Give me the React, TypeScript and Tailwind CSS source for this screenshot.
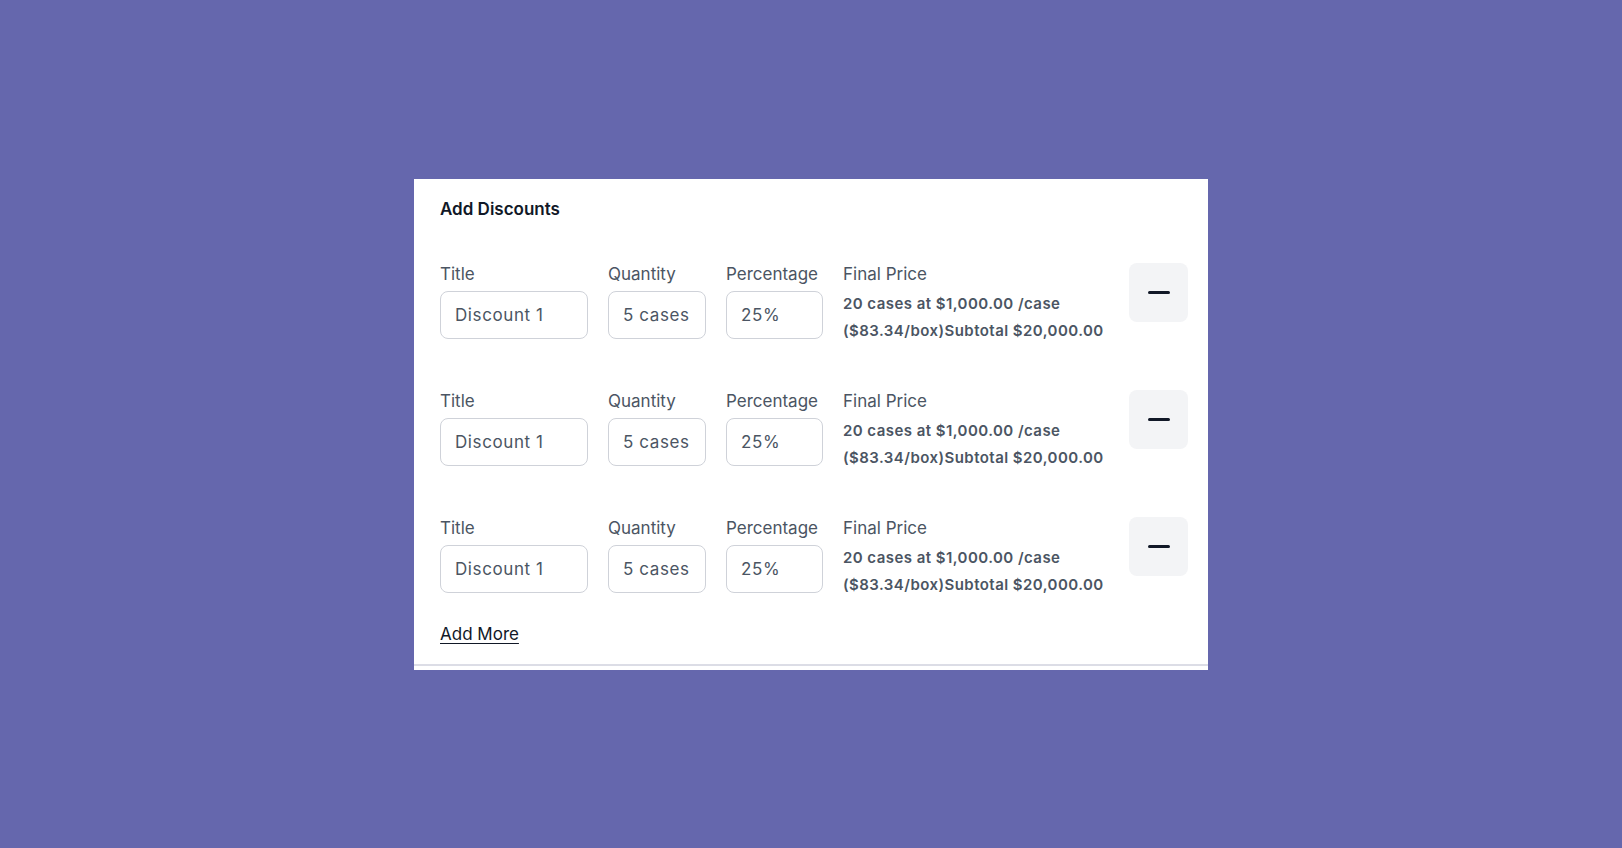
const rows = [1, 2, 3];

function DiscountRow() {
  return (
    <div className="flex items-start gap-5">
      <div className="flex w-[148px] flex-col gap-[5px]">
        <span className="text-[17px] leading-6 text-[#4b5563]">Title</span>
        <div className="flex h-[48px] items-center rounded-lg border border-[#cfd2d9] px-[14px] pt-[2px] text-[17px] tracking-[0.035em] text-[#4b5563]">
          Discount 1
        </div>
      </div>
      <div className="flex w-[98px] flex-col gap-[5px]">
        <span className="text-[17px] leading-6 text-[#4b5563]">Quantity</span>
        <div className="flex h-[48px] items-center rounded-lg border border-[#cfd2d9] px-[14px] pt-[2px] text-[17px] tracking-[0.035em] text-[#4b5563]">
          5 cases
        </div>
      </div>
      <div className="flex w-[97px] flex-col gap-[5px]">
        <span className="whitespace-nowrap text-[17px] leading-6 text-[#4b5563]">Percentage</span>
        <div className="flex h-[48px] items-center rounded-lg border border-[#cfd2d9] px-[14px] pt-[2px] text-[17px] tracking-[0.035em] text-[#4b5563]">
          25%
        </div>
      </div>
      <div className="flex flex-col">
        <span className="text-[17px] leading-6 text-[#4b5563]">Final Price</span>
        <p className="mt-[4px] text-[15px] font-semibold leading-[27px] tracking-[0.03em] text-[#4b5563]">
          20 cases at $1,000.00 /case
          <br />
          ($83.34/box)Subtotal $20,000.00
        </p>
      </div>
      <button className="ml-auto mt-[1px] flex h-[59px] w-[59px] items-center justify-center rounded-lg bg-[#f3f4f6]">
        <span className="block h-[3px] w-[22px] rounded-full bg-[#111827]" />
      </button>
    </div>
  );
}

export default function App() {
  return (
    <div
      className="flex min-h-screen items-start justify-center bg-[#6567ad] pt-[179px]"
      style={{ fontFamily: "Inter, 'Noto Sans', sans-serif" }}
    >
      <div className="flex w-[794px] flex-col bg-white">
        <div className="flex flex-col pl-[26px] pr-[20px] pt-[18px]">
          <h2 className="text-[17px] font-semibold leading-6 text-[#111827]">Add Discounts</h2>
          <div className="mt-[41px] flex flex-col gap-[45px]">
            {rows.map((r) => (
              <DiscountRow key={r} />
            ))}
          </div>
          <a className="mt-[24px] self-start text-[17px] leading-6 text-[#111827] underline underline-offset-[3px]">
            Add More
          </a>
          <div className="h-[18px]" />
        </div>
        <div className="h-[2px] bg-[#dcdde6]" />
        <div className="h-[4px]" />
      </div>
    </div>
  );
}
